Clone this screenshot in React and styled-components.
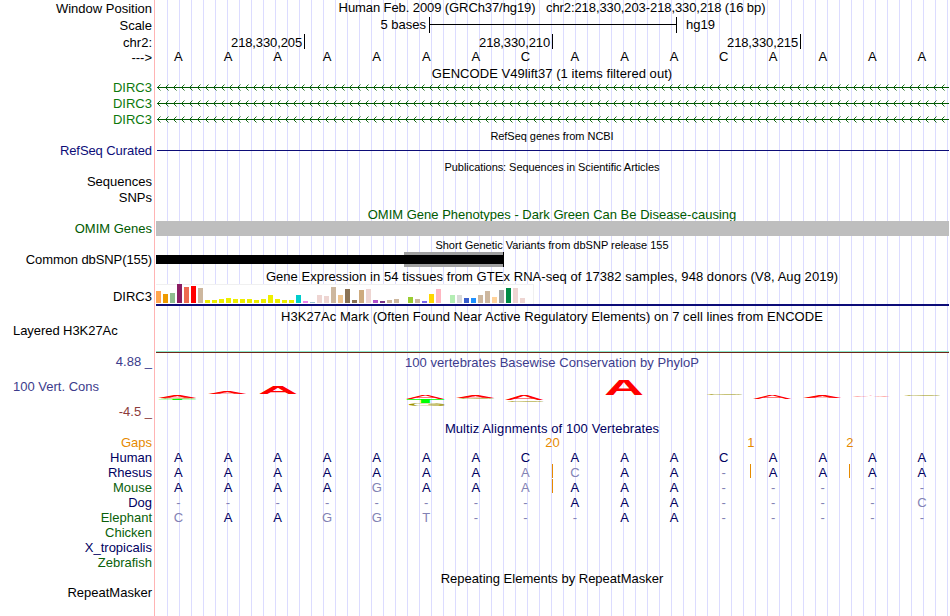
import React from 'react'
import styled, { createGlobalStyle } from 'styled-components'

const Global = createGlobalStyle`
    body {
        margin: 0;
        background-color: #fff;
        overflow: hidden;
    }
`;
const Page = styled.div`
    width: 949px;
    height: 616px;
    overflow: hidden;
    display: flex;
    flex-direction: column;
    font-family: "Liberation Sans", Arial, sans-serif;
    font-size: 13px;
    line-height: 15px;
    color: #000;
    white-space: pre;
`;
const Row = styled.div`
    display: flex;
    flex: none;
    height: ${(p) => p.$h}px;
`;
const Labels = styled.div`
    width: 154px;
    flex: none;
`;
const Label = styled.div`
    box-sizing: border-box;
    height: ${(p) => (p.$h ? p.$h + 'px' : 'auto')};
    padding: ${(p) => p.$top || 0}px 2px 0 13px;
    text-align: ${(p) => (p.$left ? 'left' : 'right')};
    letter-spacing: ${(p) => p.$ls || 0}px;
    color: ${(p) => p.$color || '#000'};
`;
const Track = styled.div`
    width: 793px;
    flex: none;
    border-left: 1px solid #ffb4b4;
    padding-left: 1px;
    background-image: linear-gradient(to right, #dcdcff 1px, transparent 1px);
    background-size: 12px 100%;
    background-position: 11px 0;
    background-origin: content-box;
    background-clip: content-box;
`;
const Title = styled.div`
    box-sizing: border-box;
    height: ${(p) => (p.$h ? p.$h + 'px' : '100%')};
    overflow: ${(p) => (p.$clip ? 'hidden' : 'visible')};
    padding-top: ${(p) => p.$top || 0}px;
    padding-right: 1px;
    text-align: center;
    letter-spacing: ${(p) => p.$ls || 0}px;
    color: ${(p) => p.$color || '#000'};
    font-size: ${(p) => (p.$small ? 11 : 13)}px;
    line-height: ${(p) => (p.$small ? 12 : 15)}px;
`;
const ScaleLine = styled.div`
    display: flex;
`;
const ScaleText = styled.div`
    width: 270px;
    padding-right: 3px;
    text-align: right;
`;
const ScaleBar = styled.div`
    box-sizing: border-box;
    width: 248px;
    height: 16px;
    margin-right: 9px;
    border: solid #000;
    border-width: 0 1px;
    background: linear-gradient(#000, #000) 0 7px / 100% 1px no-repeat;
`;
const Ruler = styled.div`
    display: flex;
`;
const Tick = styled.div`
    box-sizing: border-box;
    width: ${(p) => p.$w}px;
    height: 15px;
    padding: 1px 2px 0 0;
    border-right: 1px solid #000;
    text-align: right;
    letter-spacing: -0.12px;
`;
const Bases = styled.div`
    display: grid;
    grid-template-columns: repeat(16, 1fr);
`;
const Base = styled.div`
    position: relative;
    padding-right: 4.7px;
    text-align: center;
    color: ${(p) => p.$color};
`;
const GapMark = styled.div`
    position: absolute;
    left: -0.5px;
    top: -1px;
    width: 1px;
    height: 14px;
    background-color: #e68a00;
`;
const GapCount = styled.div`
    position: absolute;
    left: -20px;
    width: 40px;
    text-align: center;
    color: #e68a00;
`;
const Intron = styled.svg`
    display: block;
`;
const CuratedLine = styled.div`
    height: 1px;
    margin-left: 1px;
    border-top: 7px solid transparent;
    background: #0c0c78 content-box;
`;
const OmimBar = styled.div`
    height: 15px;
    background-color: #bebebe;
`;
const SnpBlock = styled.div`
    box-sizing: border-box;
    width: 348px;
    height: 15px;
    border-right: 1px solid #000;
    background:
        linear-gradient(#000, #000) 0 3px / 100% 9px no-repeat,
        linear-gradient(#a0a0a0, #a0a0a0) 248px 0 / 100px 100% no-repeat;
`;
const Tissues = styled.div`
    box-sizing: border-box;
    width: 378px;
    height: 20px;
    padding-bottom: 1px;
    border: solid #f0f0f0;
    border-width: 1px 1px 0 0;
    background-color: #fff;
    display: flex;
    align-items: flex-end;
    gap: 2px;
`;
const Tissue = styled.div`
    width: 5px;
    flex: none;
    height: ${(p) => p.$h}px;
    background-color: ${(p) => p.$color};
`;
const GeneModel = styled.div`
    height: 2px;
    background-color: #0c0c78;
`;
const Histone = styled.div`
    height: 30px;
    box-sizing: border-box;
    border-bottom: 1px solid #6e2819;
    background: linear-gradient(#8ce6c8, #8ce6c8) 0 28px / 100% 1px no-repeat;
`;
const Logo = styled.svg`
    display: block;
    font-size: 50px;
`;

const NAVY = '#00005f'
const PALE = '#8282b4'
const GREEN = '#0a5f0a'

const tissues = [
    [12, '#ffa54f'], [9, '#ee9a00'], [10, '#8fbc8f'], [19, '#8b1c62'], [16, '#ee6a50'], [17, '#ff0000'],
    [15, '#cdb79e'], [3, '#eeee00'], [3, '#eeee00'], [4, '#eeee00'], [5, '#eeee00'], [4, '#eeee00'],
    [4, '#eeee00'], [4, '#eeee00'], [3, '#eeee00'], [4, '#eeee00'], [8, '#eeee00'], [4, '#eeee00'],
    [3, '#eeee00'], [3, '#eeee00'], [8, '#00cdcd'], [2, '#ee82ee'], [1, '#9ac0cd'], [8, '#eed5d2'],
    [7, '#eed5d2'], [16, '#cdb79e'], [8, '#eec591'], [14, '#8b7355'], [3, '#8b7355'], [13, '#cdaa7d'],
    [14, '#eed5d2'], [3, '#b452cd'], [2, '#7a378b'], [3, '#cdb79e'], [4, '#cdb79e'], [0, '#cdb79e'],
    [6, '#9acd32'], [4, '#cdb79e'], [2, '#7a67ee'], [9, '#ffd700'], [14, '#ffb6c1'], [0, '#cd9b1d'],
    [8, '#b4eeb4'], [8, '#d9d9d9'], [5, '#3a5fcd'], [5, '#1e90ff'], [8, '#cdb79e'], [12, '#cdb79e'],
    [6, '#ffd39b'], [13, '#a6a6a6'], [15, '#008b45'], [15, '#eed5d2'], [5, '#eed5d2'], [0, '#ff00ff'],
]

// left edge, top and height of each conservation letter, inside the track
const letters = [
    ['A', 2, 25, 3], ['G', 2, 28, 1], ['T', 2, 29, 1],
    ['A', 52, 21, 3],
    ['A', 102, 17, 7],
    ['A', 250, 25, 4], ['T', 250, 29, 4], ['G', 250, 33, 2.5],
    ['A', 300, 25, 2.5], ['G', 300, 27.3, 1.2],
    ['A', 349, 25, 5], ['G', 349, 30, 1.5],
    ['A', 448, 10, 15],
    ['G', 548, 24, 0.8],
    ['A', 597, 25, 4],
    ['A', 647, 25, 3],
    ['A', 696, 25.5, 1.6],
    ['G', 746, 25, 0.7],
]
const letterColors = { A: '#ff0000', G: '#a09600', T: '#00ff00' }

const human = 'AAAAAAACAAACAAAA'
const species = [
    { name: 'Human', color: NAVY, seq: human, gaps: [] },
    { name: 'Rhesus', color: NAVY, seq: 'AAAAAAAACAA-AAAA', gaps: [8, 12, 14] },
    { name: 'Mouse', color: GREEN, seq: 'AAAAGAAAAAA-----', gaps: [8] },
    { name: 'Dog', color: NAVY, seq: '--------AAA----C', gaps: [] },
    { name: 'Elephant', color: GREEN, seq: 'CAAGGT---AA-----', gaps: [] },
    { name: 'Chicken', color: GREEN, seq: '', gaps: [] },
    { name: 'X_tropicalis', color: NAVY, seq: '', gaps: [] },
    { name: 'Zebrafish', color: GREEN, seq: '', gaps: [] },
]
const gapCounts = { 8: '20', 12: '1', 14: '2' }

const TitleRow = ({ h = 15, label, children, ...rest }) => (
    <Row $h={h}>
        <Labels>{label}</Labels>
        <Track><Title {...rest}>{children}</Title></Track>
    </Row>
)

const TrackRow = ({ h = 16, name, top, left, ls, color, children }) => (
    <Row $h={h}>
        <Labels><Label $top={top} $left={left} $ls={ls} $color={color}>{name}</Label></Labels>
        <Track>{children}</Track>
    </Row>
)

const Gene = () => {
    let d = ''
    for (let x = 1; x < 793; x += 8) {
        d += `M${x + 3.5} 4.5L${x + 0.5} 7.5L${x + 3.5} 10.5`
    }
    return (
        <Intron width="793" height="16">
            <path d="M1 7.5H793" stroke="#005a00" />
            <path d={d} stroke="#005a00" strokeWidth="0.9" fill="none" />
        </Intron>
    )
}

// short letters are drawn in the regular weight, or the strokes run together
const letterScale = (ch, h) => {
    if (ch === 'A') return h < 6 ? 38.5 / 33.4 : 39 / 35.2
    if (ch === 'G') return 38 / 35
    return 38 / 30
}

const Conservation = () => (
    <Logo width="793" height="50">
        {letters.map(([ch, x, y, h], i) => (
            <text
                key={i}
                fill={letterColors[ch]}
                fontWeight={ch === 'T' || h >= 6 ? 'bold' : 'normal'}
                transform={`translate(${x} ${y + h}) scale(${letterScale(ch, h)} ${h / 34.4})`}
            >
                {ch}
            </text>
        ))}
    </Logo>
)

const App = () => {
    return (
        <Page>
            <Global />
            <TitleRow h={17} $ls={-0.09} label={<Label $top={1}>Window Position</Label>}>
                {'Human Feb. 2009 (GRCh37/hg19)   chr2:218,330,203-218,330,218 (16 bp)'}
            </TitleRow>
            <TrackRow h={17} name="Scale" top={1}>
                <ScaleLine>
                    <ScaleText>5 bases</ScaleText>
                    <ScaleBar />
                    <div>hg19</div>
                </ScaleLine>
            </TrackRow>
            <TrackRow h={15} name="chr2:" top={1}>
                <Ruler>
                    <Tick $w={149}>218,330,205</Tick>
                    <Tick $w={248}>218,330,210</Tick>
                    <Tick $w={248}>218,330,215</Tick>
                </Ruler>
            </TrackRow>
            <TrackRow name="--->" top={1}>
                <Bases>
                    {human.split('').map((b, i) => <Base key={i}>{b}</Base>)}
                </Bases>
            </TrackRow>
            <TitleRow $top={1} $ls={0.05}>GENCODE V49lift37 (1 items filtered out)</TitleRow>
            <TrackRow name="DIRC3" color="#0c780c"><Gene /></TrackRow>
            <TrackRow name="DIRC3" color="#0c780c"><Gene /></TrackRow>
            <TrackRow name="DIRC3" color="#0c780c"><Gene /></TrackRow>
            <TitleRow $small $top={2} $ls={-0.04}>RefSeq genes from NCBI</TitleRow>
            <TrackRow name="RefSeq Curated" ls={-0.08} color="#0c0c78"><CuratedLine /></TrackRow>
            <TitleRow $small $top={2} $ls={-0.06}>Publications: Sequences in Scientific Articles</TitleRow>
            <TrackRow name="Sequences" />
            <TrackRow name="SNPs" />
            <TitleRow $clip $top={1} $color="#005a00">
                OMIM Gene Phenotypes - Dark Green Can Be Disease-causing
            </TitleRow>
            <TrackRow name="OMIM Genes" color="#005a00"><OmimBar /></TrackRow>
            <TitleRow $small $top={2}>Short Genetic Variants from dbSNP release 155</TitleRow>
            <TrackRow name="Common dbSNP(155)" ls={-0.1}><SnpBlock /></TrackRow>
            <TitleRow h={16} $top={1} $ls={0.055}>
                Gene Expression in 54 tissues from GTEx RNA-seq of 17382 samples, 948 donors (V8, Aug 2019)
            </TitleRow>
            <TrackRow h={24} name="DIRC3" top={5}>
                <Tissues>
                    {tissues.map(([h, color], i) => <Tissue key={i} $h={h} $color={color} />)}
                </Tissues>
                <GeneModel />
            </TrackRow>
            <TitleRow $top={1} $ls={0.05}>
                H3K27Ac Mark (Often Found Near Active Regulatory Elements) on 7 cell lines from ENCODE
            </TitleRow>
            <TrackRow h={31} name="Layered H3K27Ac" ls={-0.06} left><Histone /></TrackRow>
            <Row $h={66}>
                <Labels>
                    <Label $h={25} $color="#3c3c8c">4.88 _</Label>
                    <Label $h={25} $color="#3c3c8c" $left>100 Vert. Cons</Label>
                    <Label $color="#8c3c3c">-4.5 _</Label>
                </Labels>
                <Track>
                    <Title $h={16} $top={1} $ls={0.04} $color="#3c3c8c">
                        100 vertebrates Basewise Conservation by PhyloP
                    </Title>
                    <Conservation />
                </Track>
            </Row>
            <TitleRow $top={1} $ls={0.09} $color={NAVY}>Multiz Alignments of 100 Vertebrates</TitleRow>
            <TrackRow h={15} name="Gaps" color="#e68a00">
                <Bases>
                    {human.split('').map((b, i) => (
                        <Base key={i}>{gapCounts[i] && <GapCount>{gapCounts[i]}</GapCount>}</Base>
                    ))}
                </Bases>
            </TrackRow>
            {species.map((s) => (
                <TrackRow key={s.name} h={15} name={s.name} color={s.color}>
                    <Bases>
                        {s.seq.split('').map((b, i) => (
                            <Base key={i} $color={b === human[i] ? NAVY : PALE}>
                                {s.gaps.includes(i) && <GapMark />}
                                {b}
                            </Base>
                        ))}
                    </Bases>
                </TrackRow>
            ))}
            <TitleRow $top={1}>Repeating Elements by RepeatMasker</TitleRow>
            <TrackRow h={31} name="RepeatMasker" />
        </Page>
    )
}

export default App
